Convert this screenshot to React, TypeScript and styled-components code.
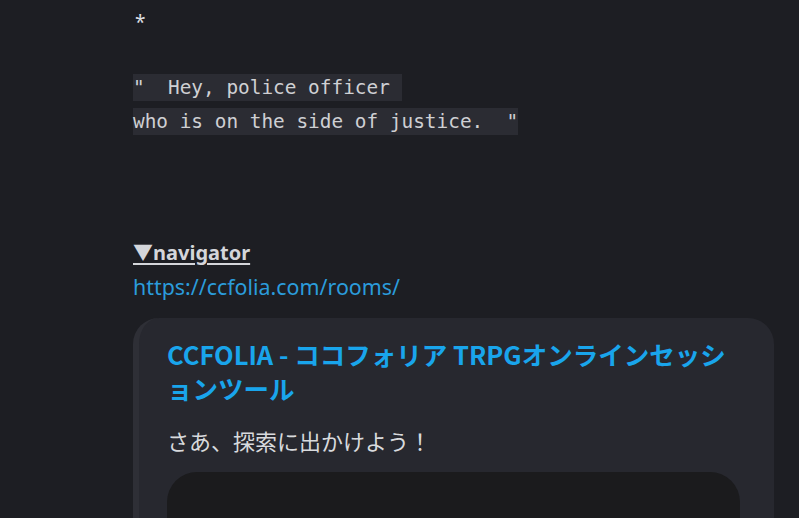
import React, { FC } from 'react';
import styled, { createGlobalStyle } from 'styled-components';

const GlobalStyle = createGlobalStyle`
  html, body {
    margin: 0;
    padding: 0;
    background: #1d1e23;
  }
  body {
    font-family: 'Noto Sans', 'Noto Sans CJK JP', sans-serif;
    color: #dbdee1;
    overflow: hidden;
  }
`;

const Page = styled.div`
  display: flex;
  flex-direction: column;
  align-items: flex-start;
  min-height: 518px;
  padding: 3px 25px 0 133px;
  box-sizing: border-box;
`;

const Line = styled.div`
  font-size: 19px;
  line-height: 34px;
  padding: 2px 0 0 2px;
`;

const CodeBlock = styled.div`
  margin-top: 32px;
  font-family: 'DejaVu Sans Mono', 'Liberation Mono', monospace;
  font-size: 19.4px;
  line-height: 34px;
  color: #cfd0d3;
  white-space: pre;
`;

const Code = styled.span`
  background: #2b2c33;
  padding: 2px 0;
  box-decoration-break: clone;
  -webkit-box-decoration-break: clone;
`;

const Heading = styled.div`
  margin-top: 97px;
  font-size: 20px;
  line-height: 34px;
  font-weight: 700;
  color: #d4d6da;
  text-decoration: underline;
  text-underline-offset: 3px;
  text-decoration-thickness: 2px;
`;

const Link = styled.a`
  font-size: 21.4px;
  line-height: 34px;
  color: #2b9cdb;
  text-decoration: none;
`;

const Embed = styled.div`
  margin-top: 14px;
  width: 641px;
  box-sizing: border-box;
  background: #27282f;
  border-left: 6px solid #2e2f36;
  border-radius: 26px 26px 0 0;
  padding: 19px 34px 0 28px;
`;

const EmbedTitle = styled.div`
  font-family: 'Noto Sans CJK JP', sans-serif;
  font-size: 25.5px;
  line-height: 34px;
  font-weight: 700;
  color: #19a5ec;
  padding-right: 12px;
`;

const EmbedText = styled.div`
  margin-top: 20px;
  font-family: 'Noto Sans CJK JP', sans-serif;
  font-size: 22px;
  line-height: 30px;
  color: #d8dadd;
`;

const Preview = styled.div`
  margin-top: 17px;
  height: 260px;
  background: #1b1b1d;
  border-radius: 30px;
`;

const App: FC = () => (
  <>
    <GlobalStyle />
    <Page>
      <Line>*</Line>
      <CodeBlock>
        <Code>
          {'"  Hey, police officer '}
          <br />
          {'who is on the side of justice.  "'}
        </Code>
      </CodeBlock>
      <Heading>▼navigator</Heading>
      <Link href="#">https://ccfolia.com/rooms/</Link>
      <Embed>
        <EmbedTitle>CCFOLIA - ココフォリア TRPGオンラインセッションツール</EmbedTitle>
        <EmbedText>さあ、探索に出かけよう！</EmbedText>
        <Preview />
      </Embed>
    </Page>
  </>
);

export default App;
